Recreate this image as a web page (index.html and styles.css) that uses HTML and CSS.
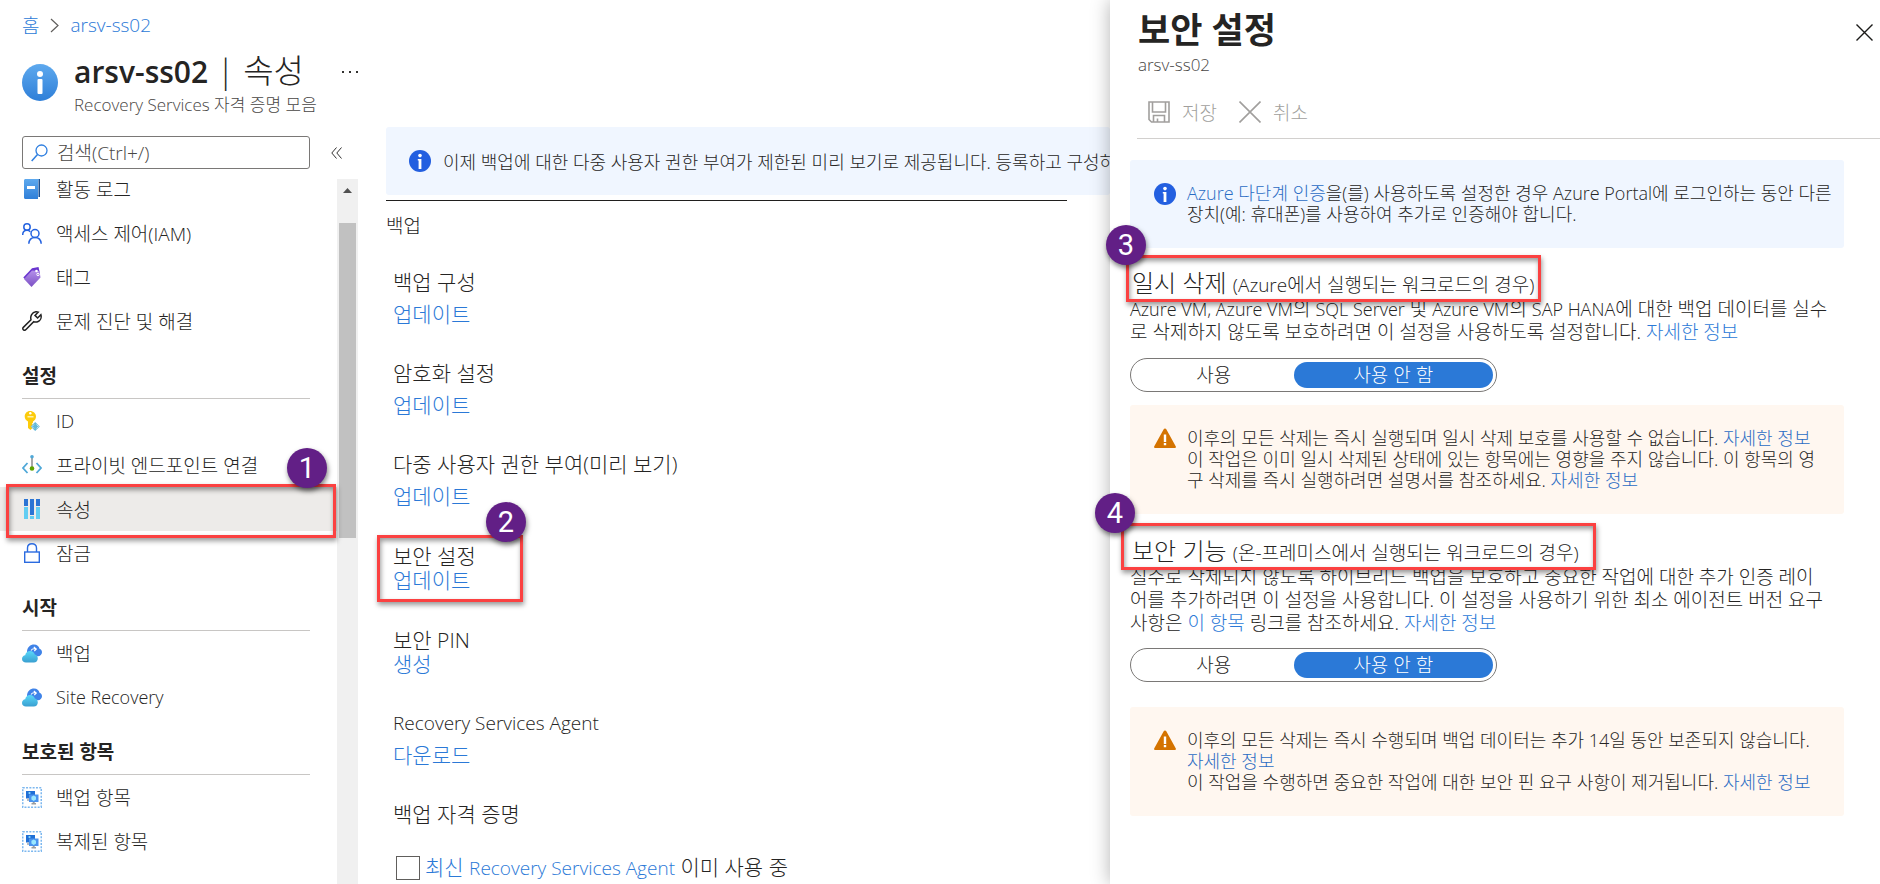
FILE: index.html
```html
<!DOCTYPE html>
<html lang="ko">
  <head>
    <meta charset="UTF-8" />
    <meta name="viewport" content="width=device-width, initial-scale=1.0" />
    <title>arsv-ss02 | 속성</title>
    <link rel="stylesheet" href="styles.css">
  </head>
  <body>
    <!-- Shared icons -->
    <svg class="defs" width="0" height="0" aria-hidden="true">
      <defs>
        <linearGradient id="blue" x1="0" y1="0" x2="0" y2="1">
          <stop offset="0" stop-color="#5ea9ee" />
          <stop offset="1" stop-color="#2f7fd8" />
        </linearGradient>
        <linearGradient id="cyan" x1="0" y1="0" x2="0" y2="1">
          <stop offset="0" stop-color="#58d8fa" />
          <stop offset="1" stop-color="#3a9fd0" />
        </linearGradient>
        <linearGradient id="purple" x1="0" y1="0" x2="0" y2="1">
          <stop offset="0" stop-color="#b591ea" />
          <stop offset="1" stop-color="#7b4fc4" />
        </linearGradient>
        <symbol id="icon-info" viewBox="0 0 22 22">
          <circle cx="11" cy="11" r="11" fill="#235fe0" />
          <circle cx="11" cy="5.6" r="1.8" fill="#fff" />
          <path d="M8.8 9h3.6v10H9.6v-8.4h-.8z" fill="#fff" />
        </symbol>
        <symbol id="icon-warning" viewBox="0 0 22 20">
          <path d="M11 .5c.6 0 1 .3 1.3.8l9.4 17c.5.9 0 1.7-1 1.7H1.3c-1 0-1.5-.8-1-1.7l9.4-17C10 .8 10.400.5 11 .5z" fill="#d47300" />
          <path d="M9.800 6.500h2.400v7.500H9.800zM9.800 15h2.400v2.200H9.800z" fill="#fff" />
        </symbol>
        <symbol id="icon-cloud" viewBox="0 0 20 19">
          <path d="M5 8c0-5 3.500-7.500 7-7.500 3 0 5 1.800 5.500 4.200 1.500.6 2.500 1.800 2.500 3.500 0 2.300-1.800 4-4 4H9z" fill="#3f83e8" />
          <path d="M9 6.500c1-1.500 2.500-2 4.500-1.500M11.800 3l2.500 2-2 2" stroke="#fff" stroke-width="1.100" fill="none" />
          <path d="M4 18.500c-2.300 0-4-1.500-4-3.600 0-2 1.400-3.400 3.200-3.600C3.600 8.800 5.500 7 8 7c2.300 0 4.200 1.400 4.800 3.600 1.800.3 3 1.800 3 3.800 0 2.300-1.700 4.100-4 4.100z" fill="url(#cyan)" />
        </symbol>
        <symbol id="icon-items" viewBox="0 0 20 21">
          <rect x=".75" y=".75" width="18.500" height="19.500" fill="none" stroke="#7db8ef" stroke-width="1.500" stroke-dasharray="2 1.300" />
          <rect x="4" y="4" width="9" height="7.500" fill="#1f6fd6" />
          <path d="M5 11.500h3V14H5z" fill="#b8bcc2" />
          <rect x="7" y="7.500" width="9.500" height="7.500" fill="#4a93ee" />
          <path d="M9.500 17.500h4.500V16h-1.300v-1h-2v1H9.500z" fill="#9a9da1" />
          <path d="M11.700 8.500l2.300 1.300v2.800L11.700 14l-2.300-1.400V9.800z" fill="#9be8ff" />
          <path d="M7.500 5l1.500 1-1.500 1L6 6z" fill="#9be8ff" />
        </symbol>
      </defs>
    </svg>

    <div class="portal">
      <!-- Sidebar -->
      <div class="sidebar">
        <nav class="breadcrumb">
          <a href="#">홈</a>
          <svg width="9" height="15" viewBox="0 0 9 15"><path d="M1 1l7 6.500L1 14" fill="none" stroke="#605e5c" stroke-width="1.200" /></svg>
          <a href="#" lang="en">arsv-ss02</a>
        </nav>

        <header class="page-header">
          <svg class="page-icon" width="36" height="37" viewBox="0 0 36 37">
            <ellipse cx="18" cy="18.500" rx="18" ry="18.500" fill="url(#blue)" />
            <circle cx="18" cy="10" r="3" fill="#fff" />
            <rect x="15.500" y="15" width="5" height="15" rx="1" fill="#fff" />
          </svg>
          <div class="page-heading">
            <h1><strong>arsv-ss02</strong> | 속성</h1>
            <p class="subtitle">Recovery Services 자격 증명 모음</p>
          </div>
          <button class="icon-button more" aria-label="더 보기">
            <svg width="16" height="4" viewBox="0 0 16 4"><path d="M0 1h2v2H0zM7 1h2v2H7zM14 1h2v2h-2z" fill="#323130" /></svg>
          </button>
        </header>

        <div class="search-row">
          <label class="search">
            <svg width="17" height="18" viewBox="0 0 17 18"><circle cx="10.500" cy="6.500" r="5.500" fill="none" stroke="#2f7fe0" stroke-width="1.300" /><path d="M6.500 10.500L.7 17" stroke="#2f7fe0" stroke-width="1.500" /></svg>
            <input type="text" placeholder="검색(Ctrl+/)" aria-label="검색" />
          </label>
          <button class="icon-button" aria-label="메뉴 접기">
            <svg width="11" height="12" viewBox="0 0 11 12"><path d="M5.500.5L.8 6l4.700 5.500M10.500.5L5.800 6l4.700 5.500" fill="none" stroke="#323130" /></svg>
          </button>
        </div>

        <div class="menu-scroll">
          <nav class="menu">
            <ul>
              <li><a href="#">
                <svg width="20" height="20" viewBox="0 0 20 20"><path d="M4 0h14v18H4z" fill="#1c4f8f" /><path d="M4 .5h12.500V18H4z" fill="#dfeeff" /><path d="M3.500 2H16v18H3.500C2.600 20 2 19.400 2 18.500v-17C2 .7 2.700 0 3.500 0H17L16 2z" fill="url(#blue)" /><path d="M5 7h8v3H5z" fill="#fff" /></svg>
                활동 로그</a></li>
              <li><a href="#">
                <svg width="20" height="21" viewBox="0 0 20 21"><g fill="none" stroke="#2563e0" stroke-width="1.500"><circle cx="5" cy="4" r="3.200" /><path d="M.7 12c0-3 1.800-4.800 4.300-4.800 1.500 0 2.500.6 3.300 1.600" /><circle cx="13" cy="10.500" r="4" /><path d="M6.800 20.800c.2-3.800 2.700-6.300 6.200-6.300s6 2.500 6.200 6.300" /></g></svg>
                액세스 제어(IAM)</a></li>
              <li><a href="#">
                <svg width="20" height="20" viewBox="0 0 20 20"><path d="M1.300 10.500L10 1.200 16.500 0 18 6.500 9 18z" fill="#6a35cf" /><path d="M2 12l8-8.500 7.500 .500 1 6.500L9.500 20z" fill="url(#purple)" /><circle cx="14.500" cy="4" r="1.300" fill="#fff" /><circle cx="16" cy="7.500" r="1.200" fill="none" stroke="#fff" /></svg>
                태그</a></li>
              <li><a href="#">
                <svg width="20" height="20" viewBox="0 0 20 20"><path d="M1.300 16.400L9 8.700C8 5.200 10 1.300 13.800.8c1-.1 1.800 0 2.500.3L13 4.400 15.600 7l3.300-3.300c.9 3-.6 6-3.200 7-1.300.5-2.700.5-4 0L4 18.600c-.8.8-2 .8-2.700.1-.7-.6-.7-1.600 0-2.300z" fill="none" stroke="#222" stroke-width="1.500" /></svg>
                문제 진단 및 해결</a></li>
            </ul>

            <h2>설정</h2>
            <ul>
              <li><a href="#">
                <svg width="20" height="20" viewBox="0 0 20 20"><path d="M8 0c3.300 0 6 2.400 6 5.500 0 2.200-1.200 4-3 4.900v1.100l-1 1.200 1 1.200-1 1.300 1 1.200L8.500 19 6 17V10.400C4 9.500 2.700 7.700 2.700 5.500 2.700 2.400 5 0 8 0z" fill="#fccb0b" /><path d="M5.500 5h6v1.500h-6z" fill="#fff0a8" /><circle cx="8.300" cy="2.300" r="1.200" fill="#fff" /><path d="M13.200 11l4.600 4.500-4.600 4.500-4.600-4.500z" fill="#62b8d8" /><path d="M12 13.500l-2 2 2 2M14.500 13.500l2 2-2 2" fill="none" stroke="#d5f0fa" stroke-width=".8" /></svg>
                ID</a></li>
              <li><a href="#">
                <svg width="20" height="20" viewBox="0 0 20 20"><path d="M5.500 8L1 13l4.500 5M14.500 8l4.500 5-4.500 5" fill="none" stroke="#4fa8d8" stroke-width="1.800" /><path d="M10 2v10" stroke="#8c8c8c" stroke-width="1.500" /><circle cx="10" cy="1.800" r="1.800" fill="#4fa8d8" /><circle cx="10" cy="13.500" r="2.300" fill="#5ea500" /></svg>
                프라이빗 엔드포인트 연결</a></li>
              <li class="active"><a href="#">
                <svg width="20" height="20" viewBox="0 0 20 20"><path d="M2 0h4v7H2zM8 0h4v16H8zM14 0h4v7h-4z" fill="#2b74d4" /><path d="M2 8h4v12H2zM8 17h4v3H8zM14 8h4v12h-4z" fill="#62cdf2" /></svg>
                속성</a>
                <span class="callout callout-menu"></span>
                <span class="step step-menu">1</span></li>
              <li><a href="#">
                <svg width="20" height="20" viewBox="0 0 20 20"><rect x="2.700" y="9" width="14.600" height="10.300" fill="none" stroke="#2b6be0" stroke-width="1.400" /><path d="M5.500 9V5c0-2.700 2-4.300 4.500-4.300s4.500 1.600 4.500 4.300v4" fill="none" stroke="#2b6be0" stroke-width="1.400" /></svg>
                잠금</a></li>
            </ul>

            <h2>시작</h2>
            <ul>
              <li><a href="#"><svg width="20" height="19"><use href="#icon-cloud" /></svg>백업</a></li>
              <li><a href="#" lang="en"><svg width="20" height="19"><use href="#icon-cloud" /></svg>Site Recovery</a></li>
            </ul>

            <h2>보호된 항목</h2>
            <ul>
              <li><a href="#"><svg width="20" height="21"><use href="#icon-items" /></svg>백업 항목</a></li>
              <li><a href="#"><svg width="20" height="21"><use href="#icon-items" /></svg>복제된 항목</a></li>
            </ul>
          </nav>
          <div class="scrollbar">
            <svg width="9" height="5" viewBox="0 0 9 5"><path d="M4.500 0L9 5H0z" fill="#505050" /></svg>
            <div class="thumb"></div>
          </div>
        </div>
      </div>

      <!-- Properties -->
      <main class="content">
        <div class="banner">
          <svg width="22" height="22"><use href="#icon-info" /></svg>
          <span>이제 백업에 대한 다중 사용자 권한 부여가 제한된 미리 보기로 제공됩니다. 등록하고 구성하려면</span>
        </div>
        <h2>백업</h2>
        <dl class="properties">
          <div class="property">
            <dt>백업 구성</dt>
            <dd><a href="#">업데이트</a></dd>
          </div>
          <div class="property">
            <dt>암호화 설정</dt>
            <dd><a href="#">업데이트</a></dd>
          </div>
          <div class="property">
            <dt>다중 사용자 권한 부여(미리 보기)</dt>
            <dd><a href="#">업데이트</a></dd>
          </div>
          <div class="property compact">
            <dt>보안 설정</dt>
            <dd><a href="#">업데이트</a></dd>
            <span class="callout callout-security"></span>
            <span class="step step-security">2</span>
          </div>
          <div class="property compact">
            <dt>보안 PIN</dt>
            <dd><a href="#">생성</a></dd>
          </div>
          <div class="property">
            <dt lang="en">Recovery Services Agent</dt>
            <dd><a href="#">다운로드</a></dd>
          </div>
          <div class="property">
            <dt>백업 자격 증명</dt>
          </div>
        </dl>
        <div class="check-row">
          <input type="checkbox" id="agent-in-use" />
          <label for="agent-in-use"><a href="#">최신 <span lang="en">Recovery Services Agent</span></a> 이미 사용 중</label>
        </div>
      </main>

      <!-- Security settings blade -->
      <aside class="blade">
        <header class="blade-header">
          <div>
            <h2>보안 설정</h2>
            <p class="subtitle" lang="en">arsv-ss02</p>
          </div>
          <button class="icon-button close" aria-label="닫기">
            <svg width="17" height="17" viewBox="0 0 17 17"><path d="M.5.5l16 16M16.500.5l-16 16" stroke="#1b1a19" stroke-width="1.400" /></svg>
          </button>
        </header>
        <div class="commands">
          <button disabled>
            <svg width="22" height="22" viewBox="0 0 22 22" fill="none" stroke="#a19f9d" stroke-width="1.600"><path d="M1 1h20v20H3.500L1 18.500zM4.500 1v10h13V1M5.500 21v-6.500h11V21M9.500 21v-3.500" /></svg>
            저장
          </button>
          <button disabled>
            <svg width="22" height="22" viewBox="0 0 22 22"><path d="M.5.5l21 21M21.500.5l-21 21" stroke="#a19f9d" stroke-width="1.600" /></svg>
            취소
          </button>
        </div>

        <div class="blade-body">
          <div class="note info">
            <svg width="22" height="22"><use href="#icon-info" /></svg>
            <p><a href="#">Azure 다단계 인증</a>을(를) 사용하도록 설정한 경우 Azure Portal에 로그인하는 동안 다른<br />장치(예: 휴대폰)를 사용하여 추가로 인증해야 합니다.</p>
          </div>

          <section>
            <h3>일시 삭제 <small>(Azure에서 실행되는 워크로드의 경우)</small>
              <span class="callout callout-heading"></span>
              <span class="step step-heading">3</span></h3>
            <p class="description"><span lang="en">Azure VM, Azure VM</span>의 <span lang="en">SQL Server</span> 및 <span lang="en">Azure VM</span>의 <span lang="en">SAP HANA</span>에 대한 백업 데이터를 실수<br />로 삭제하지 않도록 보호하려면 이 설정을 사용하도록 설정합니다. <a href="#">자세한 정보</a></p>
            <div class="toggle">
              <button>사용</button>
              <button class="on">사용 안 함</button>
            </div>
            <div class="note warning">
              <svg width="22" height="20"><use href="#icon-warning" /></svg>
              <p>이후의 모든 삭제는 즉시 실행되며 일시 삭제 보호를 사용할 수 없습니다. <a href="#">자세한 정보</a><br />이 작업은 이미 일시 삭제된 상태에 있는 항목에는 영향을 주지 않습니다. 이 항목의 영<br />구 삭제를 즉시 실행하려면 설명서를 참조하세요. <a href="#">자세한 정보</a></p>
            </div>
          </section>

          <section class="features">
            <h3>보안 기능 <small>(온-프레미스에서 실행되는 워크로드의 경우)</small>
              <span class="callout callout-heading"></span>
              <span class="step step-heading">4</span></h3>
            <p class="description">실수로 삭제되지 않도록 하이브리드 백업을 보호하고 중요한 작업에 대한 추가 인증 레이<br />어를 추가하려면 이 설정을 사용합니다. 이 설정을 사용하기 위한 최소 에이전트 버전 요구<br />사항은 <a href="#">이 항목</a> 링크를 참조하세요. <a href="#">자세한 정보</a></p>
            <div class="toggle">
              <button>사용</button>
              <button class="on">사용 안 함</button>
            </div>
            <div class="note warning">
              <svg width="22" height="20"><use href="#icon-warning" /></svg>
              <p>이후의 모든 삭제는 즉시 수행되며 백업 데이터는 추가 14일 동안 보존되지 않습니다.<br /><a href="#">자세한 정보</a><br />이 작업을 수행하면 중요한 작업에 대한 보안 핀 요구 사항이 제거됩니다. <a href="#">자세한 정보</a></p>
            </div>
          </section>
        </div>
      </aside>
    </div>
  </body>
</html>
```

FILE: styles.css
```css
/* Global Styles */
* {
  box-sizing: border-box;
}

body {
  margin: 0;
  font-family: "Open Sans", "Noto Sans CJK KR", sans-serif;
  font-size: 19px;
  font-weight: 300;
  color: #252423;
  background-color: #fff;
}

h1,
h2,
h3,
p,
ul,
dl,
dd {
  margin: 0;
  padding: 0;
}

ul {
  list-style: none;
}

a {
  color: #2b79d7;
  text-decoration: none;
}

button,
input {
  font: inherit;
  color: inherit;
}

button {
  padding: 0;
  border: none;
  background: none;
  cursor: pointer;
}

svg {
  flex: none;
}

.defs {
  position: absolute;
}

.portal {
  display: flex;
  height: 100vh;
  overflow: hidden;
}

.icon-button {
  display: flex;
}

.subtitle {
  font-size: 17px;
  line-height: 24px;
  color: #484644;
}

/* Sidebar */
.sidebar {
  display: flex;
  flex-direction: column;
  flex: 0 0 358px;
  white-space: nowrap;
}

.breadcrumb {
  display: flex;
  align-items: center;
  gap: 11px;
  height: 50px;
  padding-left: 22px;
}

.page-header {
  display: flex;
  gap: 16px;
  height: 86px;
  padding-left: 22px;
}

.page-icon {
  margin-top: 14px;
}

.page-heading {
  flex: 1;
}

.page-header h1 {
  font-size: 33px;
  font-weight: 300;
  line-height: 42px;
}

.page-header strong {
  font-size: 30px;
  font-weight: 600;
}

.more {
  align-self: flex-start;
  margin-top: 20px;
}

.search-row {
  display: flex;
  align-items: center;
  gap: 21px;
  padding-left: 22px;
}

.search {
  display: flex;
  align-items: center;
  gap: 9px;
  width: 288px;
  height: 33px;
  padding: 0 8px;
  border: 1px solid #7a7876;
  border-radius: 3px;
}

.search input {
  flex: 1;
  min-width: 0;
  padding: 0;
  border: none;
  outline: none;
}

.search input::placeholder {
  color: #484644;
}

/* Menu */
.menu-scroll {
  display: flex;
  flex: 1;
  min-height: 0;
  overflow: hidden;
}

.menu {
  flex: 1;
  margin-top: -2px;
}

.menu li {
  position: relative;
}

.menu a {
  display: flex;
  align-items: center;
  gap: 14px;
  height: 44px;
  padding-left: 22px;
  color: #252423;
}

.menu a[lang="en"] {
  font-size: 18px;
}

.menu .active {
  background-color: #edebe9;
}

.menu h2 {
  height: 56px;
  margin: 0 27px 0 22px;
  padding-top: 20px;
  border-bottom: 1px solid #c8c6c4;
  font-size: 19px;
  font-weight: 700;
  line-height: 26px;
}

.scrollbar {
  display: flex;
  flex-direction: column;
  align-items: center;
  gap: 30px;
  width: 21px;
  margin-top: 10px;
  padding-top: 9px;
  background-color: #f0f0f0;
}

.thumb {
  width: 17px;
  height: 315px;
  background-color: #c1c1c1;
}

/* Properties */
.content {
  flex: 1;
  min-width: 0;
  padding: 127px 43px 0 28px;
}

.banner {
  display: flex;
  align-items: center;
  gap: 12px;
  height: 68px;
  margin-right: -43px;
  padding-left: 23px;
  border-radius: 3px;
  background-color: #f0f6ff;
  font-size: 18px;
  white-space: nowrap;
  overflow: hidden;
}

.content h2 {
  margin-top: 5px;
  padding-top: 11px;
  border-top: 1px solid #201f1e;
  font-size: 19px;
  font-weight: 300;
  line-height: 28px;
}

.properties {
  padding: 26px 0 0 7px;
  font-size: 21px;
}

.property {
  position: relative;
  margin-bottom: 27px;
  line-height: 32px;
}

.property.compact {
  padding: 5px 0 4px;
  line-height: 24px;
}

.content [lang="en"] {
  font-size: 19px;
}

.check-row {
  display: flex;
  align-items: center;
  gap: 5px;
  margin-top: -2px;
  padding-left: 10px;
  font-size: 21px;
  line-height: 24px;
}

.check-row input {
  appearance: none;
  width: 24px;
  height: 24px;
  margin: 0;
  border: 1px solid #605e5c;
}

/* Blade */
.blade {
  position: relative;
  flex: 0 0 770px;
  min-width: 0;
  background-color: #fff;
  box-shadow: 0 0 18px rgba(0, 0, 0, 0.3);
}

.blade-header {
  display: flex;
  justify-content: space-between;
  height: 87px;
  padding: 7px 7px 0 28px;
}

.blade-header h2 {
  font-size: 35px;
  font-weight: 700;
  line-height: 46px;
}

.close {
  align-self: flex-start;
  margin-top: 17px;
}

.commands {
  display: flex;
  gap: 22px;
  height: 52px;
  margin-left: 27px;
  padding-left: 11px;
  border-bottom: 1px solid #d2d0ce;
}

.commands button {
  display: flex;
  align-items: center;
  gap: 12px;
  height: 50px;
  color: #a19f9d;
}

.blade-body {
  padding: 21px 36px 0 20px;
}

.note {
  display: flex;
  gap: 11px;
  padding: 23px 24px;
  border-radius: 3px;
  font-size: 18px;
  line-height: 21px;
  white-space: nowrap;
}

.note a {
  color: #2b6cc4;
}

.note.info {
  min-height: 88px;
  background-color: #f0f6ff;
}

.note.warning {
  min-height: 108px;
  background-color: #fff7f0;
}

.blade h3 {
  position: relative;
  width: max-content;
  margin-top: 11px;
  padding: 11px 0 0 2px;
  font-size: 24px;
  font-weight: 300;
  line-height: 26px;
}

.blade h3 small {
  font-size: 19px;
}

.description {
  line-height: 23px;
  white-space: nowrap;
}

.description [lang="en"] {
  font-size: 18px;
}

.toggle {
  display: flex;
  width: 367px;
  height: 34px;
  margin: 14px 0 13px;
  padding: 3px;
  border: 1px solid #7a7876;
  border-radius: 17px;
}

.toggle button {
  flex: 4;
  border-radius: 13px;
  line-height: 24px;
}

.toggle .on {
  flex: 5;
  background-color: #2b79d7;
  color: #fff;
}

.features {
  padding-top: 2px;
}

.features .toggle {
  margin-top: 13px;
  margin-bottom: 25px;
}

/* Numbered callouts */
.callout {
  position: absolute;
  border: 3px solid #fb4141;
  box-shadow: 1px 3px 5px rgba(0, 0, 0, 0.4), inset 1px 3px 5px rgba(0, 0, 0, 0.4);
  pointer-events: none;
}

.step {
  position: absolute;
  width: 40px;
  height: 40px;
  border-radius: 50%;
  background-color: #621f86;
  box-shadow: 1px 3px 5px rgba(0, 0, 0, 0.5);
  color: #fff;
  font-family: Roboto, sans-serif;
  font-size: 29px;
  font-weight: 400;
  line-height: 40px;
  text-align: center;
}

.callout-menu {
  inset: -3px 1px -7px 6px;
}

.step-menu {
  top: -39px;
  right: 10px;
}

.callout-security {
  top: -4px;
  left: -16px;
  width: 146px;
  height: 67px;
}

.step-security {
  top: -37px;
  left: 93px;
}

.callout-heading {
  inset: -4px -7px -4px -4px;
}

.step-heading {
  top: -34px;
  left: -24px;
}

.features .callout-heading {
  right: -17px;
  left: -9px;
}

.features .step-heading {
  left: -35px;
}
```
